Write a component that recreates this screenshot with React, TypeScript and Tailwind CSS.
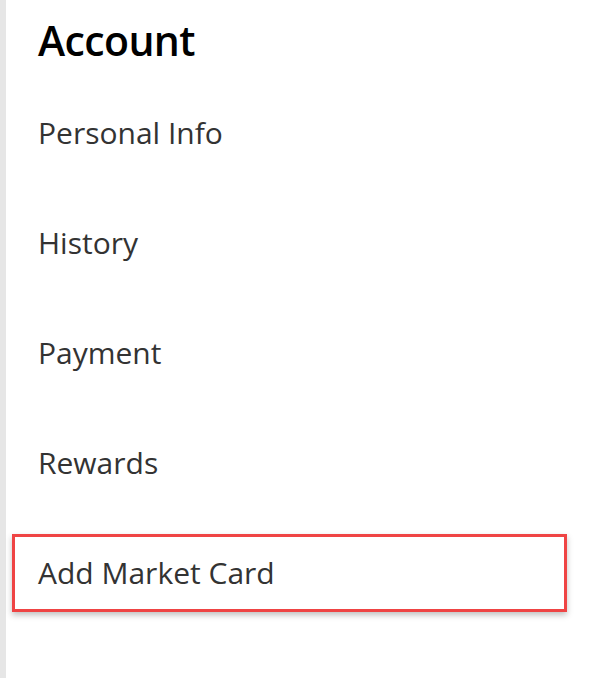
import React from 'react';

const items = ['Personal Info', 'History', 'Payment', 'Rewards', 'Add Market Card'];

export default function App() {
  return (
    <div
      className="flex h-[678px] w-[602px] bg-white"
      style={{ fontFamily: '"Open Sans", "Noto Sans", sans-serif' }}
    >
      <div className="w-[6px] flex-none bg-[#e6e6e6]" />
      <div className="flex flex-1 flex-col">
        {/* Heading */}
        <div className="flex h-[78px] items-center pl-[32px] pt-[2px]">
          <h1 className="text-[41px] font-semibold leading-none tracking-[-0.015em] text-black">Account</h1>
        </div>

        {/* Nav items */}
        <nav className="flex w-[561px] flex-col pl-[6px]">
          {items.map((item, i) => {
            const active = i === items.length - 1;
            return (
              <div
                key={item}
                className={
                  active
                    ? 'my-[16px] flex h-[78px] items-center border-[3px] border-[#ef4444] pl-[23px] shadow-[0_3px_6px_rgba(0,0,0,0.25)]'
                    : 'my-[16px] flex h-[78px] items-center pl-[26px]'
                }
              >
                <span className="text-[30px] leading-none text-[#333333]">{item}</span>
              </div>
            );
          })}
        </nav>
      </div>
    </div>
  );
}
